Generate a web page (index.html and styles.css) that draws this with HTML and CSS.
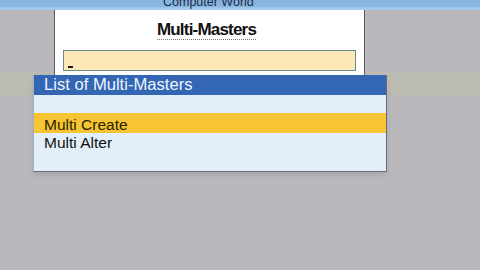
FILE: index.html
```html
<!DOCTYPE html>
<html>
<head>
<meta charset="utf-8">
<link rel="stylesheet" href="styles.css">
</head>
<body>
<div class="topbar"><span class="company">Computer World</span></div>
<div class="dialog">
  <div class="title-row"><span class="title">Multi-Masters</span></div>
  <div class="input"><span class="cursor"></span></div>
</div>
<div class="popup">
  <div class="popup-head">List of Multi-Masters</div>
  <div class="popup-body">
    <div class="item selected">Multi Create</div>
    <div class="item">Multi Alter</div>
  </div>
</div>
</body>
</html>
```
FILE: styles.css
```css
html, body {
  margin: 0;
  padding: 0;
}
body {
  width: 480px;
  height: 270px;
  overflow: hidden;
  position: relative;
  font-family: "Liberation Sans", Arial, sans-serif;
  background: linear-gradient(to bottom, #b9b8bd 0, #b9b8bd 72px, #bcbcb2 72px, #bcbcb2 95px, #b9b8bd 95px);
}
.topbar {
  height: 10px;
  overflow: hidden;
  background: linear-gradient(to bottom, #86b3dd 0, #8bb8e1 7px, #a7cdef 8px, #9fc8ec 10px);
  position: relative;
}
.company {
  display: block;
  margin-left: 163px;
  margin-top: -5px;
  font-size: 12.5px;
  line-height: 14px;
  color: #1c2c48;
  white-space: nowrap;
}
.dialog {
  margin-left: 54px;
  width: 309px;
  height: 72px;
  background: #ffffff;
  border-left: 1px solid #5a5a5e;
  border-right: 1px solid #5a5a5e;
  padding-top: 10px;
  box-sizing: content-box;
}
.title-row {
  text-align: center;
  padding-right: 6px;
  height: 20px;
}
.title {
  display: inline-block;
  font-weight: bold;
  font-size: 17px;
  letter-spacing: -0.8px;
  line-height: 19px;
  color: #111111;
  border-bottom: 1px dotted #777777;
}
.input {
  margin: 10px 8px 0 8px;
  height: 19px;
  border: 1px solid #688a8a;
  background: #fde7b7;
  position: relative;
}
.cursor {
  display: block;
  width: 5px;
  height: 2px;
  background: #1a1a1a;
  margin-left: 4px;
  margin-top: 15px;
}
.popup {
  position: absolute;
  left: 33px;
  top: 75px;
  width: 352px;
  height: 96px;
  border: 1px solid #6a6c74;
  border-left-color: #a9adb8;
  border-top: 0;
  background: #e2eefa;
  box-shadow: 0 3px 4px rgba(150, 150, 160, 0.5);
}
.popup-head {
  height: 20px;
  line-height: 20px;
  background: #3366b3;
  color: #f0f5ff;
  font-size: 16.6px;
  padding-left: 10px;
}
.popup-body {
  padding-top: 18px;
}
.item {
  height: 19px;
  line-height: 17px;
  padding-top: 1px;
  padding-left: 10px;
  font-size: 15.5px;
  color: #111111;
}
.item.selected {
  background: #f7c433;
  color: #2a1e00;
  height: 17px;
  padding-top: 3px;
}
```
